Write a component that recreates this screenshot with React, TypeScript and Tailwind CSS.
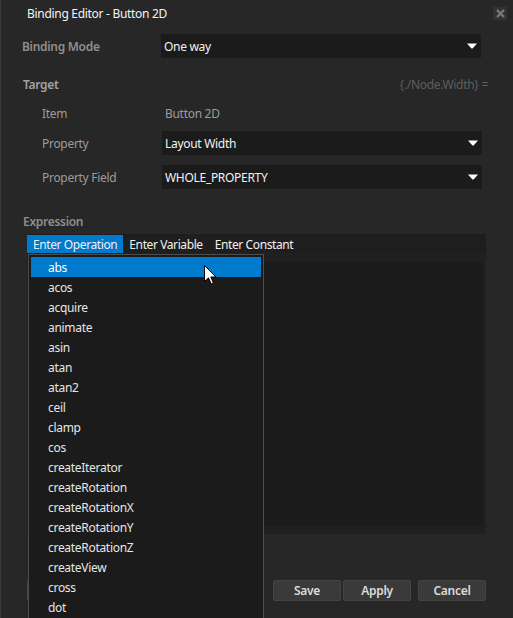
import React from "react";

const ops = [
  "abs","acos","acquire","animate","asin","atan","atan2","ceil","clamp","cos",
  "createIterator","createRotation","createRotationX","createRotationY","createRotationZ","createView","cross","dot",
];

function Arrow() {
  return (
    <svg width="10" height="6" viewBox="0 0 10 6" className="shrink-0">
      <path d="M0 0.5 H10 L6 5 Q5 6 4 5 Z" fill="#ffffff" />
    </svg>
  );
}

function Select({ value }: { value: string }) {
  return (
    <div className="flex items-center justify-between w-[320px] h-[24px] bg-[#1b1b1b] pl-[3px] pr-[4px] text-[#f2f2f2]">
      <span className="pt-[2px]">{value}</span>
      <Arrow />
    </div>
  );
}

export default function App() {
  return (
    <div
      className="relative w-[513px] h-[618px] overflow-hidden bg-[#272727] border-l border-[#3a3a3a] text-[12px] tracking-[-0.3px]"
      style={{ fontFamily: '"Noto Sans", "Segoe UI", sans-serif' }}
    >
      {/* title bar */}
      <div className="flex items-center justify-between h-[27px] pl-[26px] pr-[6px]">
        <span className="text-[#f4f4f4] pt-[1px]">Binding Editor - Button 2D</span>
        <div className="flex items-center justify-center w-[14px] h-[13px] bg-[#333333]">
          <svg width="9" height="9" viewBox="0 0 9 9">
            <path d="M1 1 L8 8 M8 1 L1 8" stroke="#7a7a7a" strokeWidth="2.2" />
          </svg>
        </div>
      </div>

      {/* Binding mode */}
      <div className="flex items-center h-[24px] mt-[7px]">
        <span className="w-[160px] pl-[21px] pt-[2px] text-[#8f8f8f] font-semibold">Binding Mode</span>
        <Select value="One way" />
      </div>

      {/* Target */}
      <div className="flex items-center justify-between h-[20px] mt-[16px] pt-[2px] pl-[22px] pr-[25px]">
        <span className="text-[#a3a3a3] font-semibold">Target</span>
        <span className="text-[#5e5e5e]">{"{./Node.Width} ="}</span>
      </div>
      <div className="flex items-center h-[20px] mt-[9px] pt-[2px]">
        <span className="w-[164px] pl-[41px] text-[#9c9c9c]">Item</span>
        <span className="text-[#9c9c9c]">Button 2D</span>
      </div>
      <div className="flex items-center h-[24px] mt-[8px]">
        <span className="w-[161px] pl-[41px] pt-[2px] text-[#9c9c9c]">Property</span>
        <Select value="Layout Width" />
      </div>
      <div className="flex items-center h-[24px] mt-[10px]">
        <span className="w-[161px] pl-[41px] pt-[2px] text-[#9c9c9c]">Property Field</span>
        <Select value="WHOLE_PROPERTY" />
      </div>

      {/* Expression */}
      <div className="flex items-center h-[20px] mt-[22px] pt-[2px] pl-[22px]">
        <span className="text-[#8f8f8f] font-semibold">Expression</span>
      </div>
      <div className="ml-[26px] mt-[3px] w-[459px] h-[300px] flex flex-col bg-[#202020]">
        <div className="flex items-end h-[19px] bg-[#1e1e1e] text-[#f0f0f0] tracking-[-0.4px]">
          <span className="h-[18px] flex items-center pt-[1px] px-[6px] bg-[#007acc]">Enter Operation</span>
          <span className="h-[18px] flex items-center pt-[1px] px-[6px]">Enter Variable</span>
          <span className="h-[18px] flex items-center pt-[1px] px-[6px]">Enter Constant</span>
        </div>
        <div className="flex-1 pt-[9px] pb-[8px] pl-[3px] pr-[3px] flex">
          <div className="flex-1 bg-[#1b1b1b]" />
        </div>
      </div>

      {/* buttons */}
      <div className="flex items-center mt-[46px] ml-[26px] w-[459px] h-[21px]">
        <button className="h-[21px] w-[68px] bg-[#3a3a3a] border border-[#444444] rounded-[2px]" />
        <div className="flex-1" />
        <button className="h-[21px] w-[68px] pt-[1px] bg-[#3a3a3a] border border-[#444444] rounded-[2px] text-[#dcdcdc] font-semibold">Save</button>
        <button className="ml-[2px] h-[21px] w-[68px] pt-[1px] bg-[#3a3a3a] border border-[#444444] rounded-[2px] text-[#dcdcdc] font-semibold">Apply</button>
        <button className="ml-[7px] h-[21px] w-[68px] pt-[1px] bg-[#3a3a3a] border border-[#444444] rounded-[2px] text-[#dcdcdc] font-semibold">Cancel</button>
      </div>

      {/* popup */}
      <div className="absolute left-[27px] top-[254px] w-[236px] h-[400px] bg-[#1b1b1b] border border-[#4d4d4d] p-[2px] text-[#e6e6e6]">
        {ops.map((o, i) => (
          <div
            key={o}
            className={`h-[20px] flex items-center pt-[2px] pl-[17px] ${i === 0 ? "bg-[#007acc] text-white" : ""}`}
          >
            {o}
          </div>
        ))}
      </div>

      {/* cursor */}
      <svg className="absolute left-[203px] top-[265px]" width="13" height="20" viewBox="0 0 13 20">
        <path d="M0.5 0.5 V16.5 L4.5 12.8 L7.2 19 L9.4 18 L6.8 12 H12 Z" fill="#ffffff" stroke="#000000" strokeWidth="1" strokeLinejoin="miter" />
      </svg>
    </div>
  );
}
